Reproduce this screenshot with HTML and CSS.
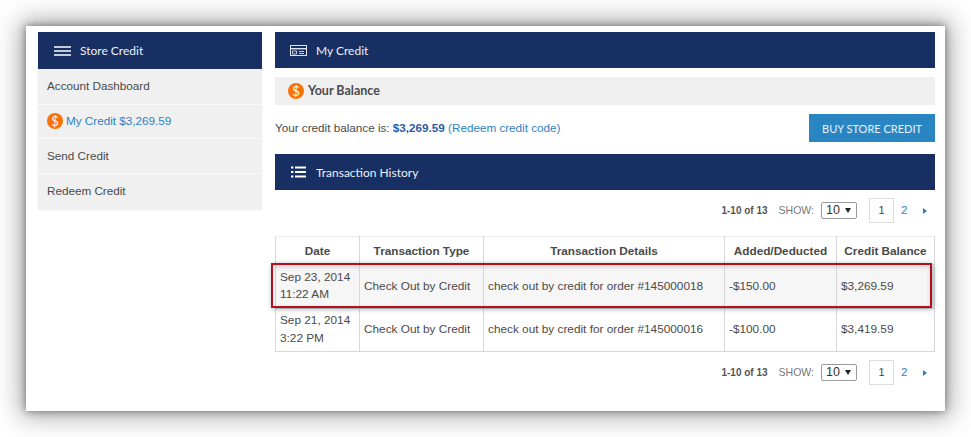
FILE: index.html
```html
<!DOCTYPE html>
<html lang="en">
<head>
<meta charset="utf-8">
<title>Store Credit</title>
<link rel="stylesheet" href="styles.css">
</head>
<body>
<div class="card">
  <aside class="side">
    <div class="bar bar-side">
      <svg class="ic-menu" width="17" height="10" viewBox="0 0 17 10"><path d="M0 1h17M0 5h17M0 9h17" stroke="#fff" stroke-width="1.6"/></svg>
      <span>Store Credit</span>
    </div>
    <a class="item">Account Dashboard</a>
    <a class="item item-active"><span class="coin">$</span><span>My Credit $3,269.59</span></a>
    <a class="item">Send Credit</a>
    <a class="item">Redeem Credit</a>
  </aside>
  <main class="main">
    <div class="bar bar-main">
      <svg class="ic-card" width="17" height="11" viewBox="0 0 17 11"><rect x="0.5" y="0.5" width="16" height="10" fill="none" stroke="#dfe4ee"/><rect x="1" y="3" width="15" height="1.4" fill="#dfe4ee"/><path d="M2.5 6h4v3h-4zM9 6.5h5M9 8.500h5" fill="none" stroke="#c4cbdb"/></svg>
      <span>My Credit</span>
    </div>
    <div class="sub"><span class="coin">$</span><b>Your Balance</b></div>
    <div class="balance">
      <span>Your credit balance is: <b class="amt">$3,269.59</b> <a class="link">(Redeem credit code)</a></span>
      <button class="buy">BUY STORE CREDIT</button>
    </div>
    <div class="bar bar-main">
      <svg class="ic-card" width="17" height="12" viewBox="-1 0 17 12"><path d="M4 1.500h11M4 6h11M4 10.500h11" stroke="#fff" stroke-width="2"/><path d="M0 1.500h2.400M0 6h2.400M0 10.500h2.400" stroke="#fff" stroke-width="2"/></svg>
      <span>Transaction History</span>
    </div>
    <div class="pager">
      <b class="count">1-10 of 13</b>
      <span class="show">SHOW:</span>
      <span class="select">10<i class="tri"></i></span>
      <span class="page">1</span>
      <a class="pnum">2</a>
      <i class="next"></i>
    </div>
    <div class="tablewrap">
      <table>
        <colgroup><col class="c1"><col class="c2"><col class="c3"><col class="c4"><col class="c5"></colgroup>
        <thead>
          <tr><th>Date</th><th>Transaction Type</th><th>Transaction Details</th><th>Added/Deducted</th><th>Credit Balance</th></tr>
        </thead>
        <tbody>
          <tr class="odd"><td>Sep 23, 2014<br>11:22 AM</td><td>Check Out by Credit</td><td>check out by credit for order #145000018</td><td>-$150.00</td><td>$3,269.59</td></tr>
          <tr><td>Sep 21, 2014<br>3:22 PM</td><td>Check Out by Credit</td><td>check out by credit for order #145000016</td><td>-$100.00</td><td>$3,419.59</td></tr>
        </tbody>
      </table>
      <div class="highlight"></div>
    </div>
    <div class="pager">
      <b class="count">1-10 of 13</b>
      <span class="show">SHOW:</span>
      <span class="select">10<i class="tri"></i></span>
      <span class="page">1</span>
      <a class="pnum">2</a>
      <i class="next"></i>
    </div>
  </main>
</div>
</body>
</html>
```
FILE: styles.css
```css
* { box-sizing: border-box; }
html, body { margin: 0; padding: 0; background: #fff; }
body {
  width: 971px;
  height: 437px;
  overflow: hidden;
  padding: 26px;
  font-family: "Liberation Sans", Arial, sans-serif;
  font-size: 11.7px;
  color: #4a4a4a;
}
.card {
  width: 919px;
  height: 385px;
  background: #fff;
  padding: 6px 10px 0 12px;
  display: flex;
  gap: 13px;
  align-items: flex-start;
  box-shadow: 0 0 8px rgba(0,0,0,.45), 0 0 24px 6px rgba(0,0,0,.32);
}
.side { width: 224px; flex: none; background: #f0f0f0; box-shadow: 0 1px 2px rgba(0,0,0,.08); }
.main { width: 660px; flex: none; }
.bar {
  background: #172f62;
  color: #eef1f7;
  display: flex;
  align-items: center;
  font-family: Lato, "Open Sans", sans-serif;
  font-size: 12px;
}
.bar-side { height: 37px; padding-left: 16px; gap: 9px; }
.bar-main { height: 36px; padding-left: 15px; gap: 9px; }
.ic-card { flex: none; }
.ic-menu { flex: none; }
.item {
  display: flex;
  align-items: center;
  height: 35px;
  padding: 0 0 2px 9px;
  border-bottom: 1px solid #fafafa;
  color: #4a4a4a;
  font-size: 11.7px;
}
.bar + .item { height: 36px; }
.item-active { color: #2b82c2; gap: 3px; height: 34px; }
.item:last-child { border-bottom: 0; }
.coin {
  width: 16px;
  height: 16px;
  flex: none;
  border-radius: 50%;
  background: #f97308;
  color: #fff;
  font-size: 13px;
  line-height: 16px;
  text-align: center;
  font-family: Lato, sans-serif;
}
.sub {
  margin-top: 9px;
  height: 28px;
  background: #f0f0f0;
  display: flex;
  align-items: center;
  gap: 4px;
  padding: 0 0 1px 13px;
}
.sub b { font-family: Lato, sans-serif; font-size: 12.500px; color: #4a4a4a; }
.balance {
  margin-top: 9px;
  height: 28px;
  display: flex;
  align-items: center;
  justify-content: space-between;
}
.balance > span { margin-bottom: 2px; }
.amt { color: #2c5aa8; }
.link { color: #2b82c2; }
.buy {
  width: 126px;
  height: 28px;
  border: 0;
  padding: 0;
  background: #2a86c3;
  color: #e6f0f8;
  font-family: Lato, sans-serif;
  font-size: 11px;
}
.balance + .bar { margin-top: 12px; }
.pager {
  display: flex;
  align-items: center;
  justify-content: flex-end;
  height: 26px;
  margin-top: 7px;
  padding-right: 8px;
  font-size: 10px;
}
.count { color: #555; font-size: 10px; }
.show { margin-left: 11px; color: #777; font-size: 10.500px; }
.select {
  margin-left: 7px;
  width: 36px;
  height: 17px;
  border: 1px solid #9a9a9a;
  border-radius: 2px;
  padding: 0 5px 0 4px;
  display: flex;
  align-items: center;
  justify-content: space-between;
  font-size: 12.500px;
  color: #333;
}
.tri { border-left: 3px solid transparent; border-right: 3px solid transparent; border-top: 5px solid #222; }
.page {
  margin-left: 12px;
  width: 25px;
  height: 25px;
  border: 1px solid #ddd;
  display: flex;
  align-items: center;
  justify-content: center;
  font-size: 11px;
  color: #444;
}
.pnum { margin-left: 7px; width: 10px; color: #2b82c2; font-size: 11.500px; }
.next { margin: 2px 0 0 12px; border-top: 3.500px solid transparent; border-bottom: 3.500px solid transparent; border-left: 4px solid #2b82c2; }
.tablewrap { position: relative; margin-top: 13px; }
table {
  width: 659px;
  table-layout: fixed;
  border-collapse: collapse;
  font-size: 11.8px;
  color: #4a4a4a;
}
.c1 { width: 84px; }
.c2 { width: 124px; }
.c3 { width: 241px; }
.c4 { width: 112px; }
.c5 { width: 98px; }
th, td { border: 1px solid #d8d8d8; }
th { height: 28px; padding: 0; font-size: 11.75px; text-align: center; color: #4a4a4a; }
thead th { border-top-color: #ececec; }
td { height: 43.500px; padding: 0 4px; line-height: 17.500px; }
.odd td { background: #f6f6f6; }
.highlight {
  position: absolute;
  left: -4px;
  top: 27px;
  width: 661px;
  height: 45px;
  border: 2px solid #b01020;
  box-shadow: 1px 1px 5px rgba(0,0,0,.35), inset 0 2px 4px rgba(0,0,0,.15);
  pointer-events: none;
}
```
